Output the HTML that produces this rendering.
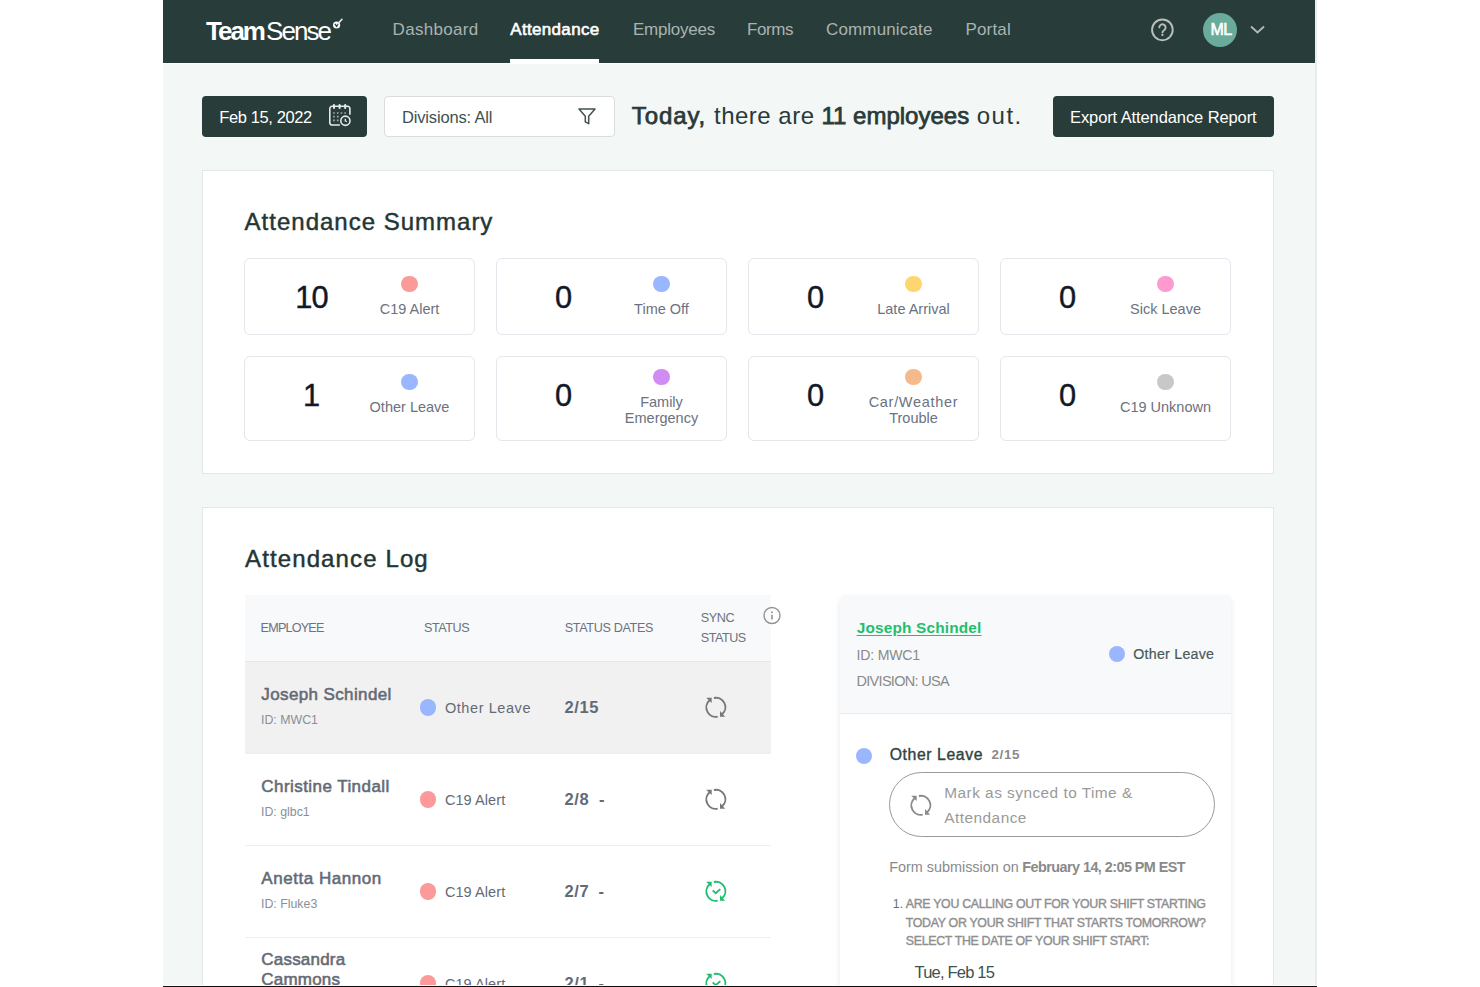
<!DOCTYPE html>
<html><head><meta charset="utf-8"><title>TeamSense Attendance</title>
<style>
html,body{margin:0;padding:0;width:1480px;height:987px;overflow:hidden;background:#fff;font-family:"Liberation Sans",sans-serif}
.r{position:absolute}
.t{position:absolute;white-space:nowrap}
b{font-weight:700}
</style></head><body>
<div class="r" style="left:163px;top:0px;width:1152px;height:985px;background:#f3f7f6"></div>
<div class="r" style="left:1315px;top:0px;width:2px;height:985px;background:#ececec"></div>
<div class="r" style="left:163px;top:0px;width:1152px;height:63px;background:#283c3a"></div>
<div class="r" style="left:163px;top:63px;width:1152px;height:1px;background:#ffffff"></div>
<div class="t " style="left:206px;top:18.49px;font-size:26px;line-height:26px;color:#fff;font-weight:400;letter-spacing:0px;"><b style="font-weight:700;letter-spacing:-2px">Team</b><span style="font-weight:400;letter-spacing:-1.95px;margin-left:2px">Sense</span></div>
<svg class="r" style="left:330px;top:16px" width="16" height="14" viewBox="0 0 16 14"><circle cx="6.6" cy="9" r="3.6" fill="#fff"/><path d="M4.9 7.9l1.7 2.4 2.4-3.8" fill="none" stroke="#283c3a" stroke-width="1.3"/><path d="M8 7.6L12 3.3" stroke="#e8ecea" stroke-width="1.6" stroke-linecap="round"/></svg>
<div class="t " style="left:392.6px;top:20.71px;font-size:17px;line-height:17px;color:#aab3b1;font-weight:400;letter-spacing:0.3px;">Dashboard</div>
<div class="t " style="left:510.3px;top:20.71px;font-size:17px;line-height:17px;color:#fff;font-weight:400;letter-spacing:0.32px;-webkit-text-stroke:0.6px #fff">Attendance</div>
<div class="r" style="left:510px;top:59px;width:89px;height:4px;background:#fff"></div>
<div class="t " style="left:633px;top:20.71px;font-size:17px;line-height:17px;color:#aab3b1;font-weight:400;letter-spacing:-0.22px;">Employees</div>
<div class="t " style="left:747px;top:20.71px;font-size:17px;line-height:17px;color:#aab3b1;font-weight:400;letter-spacing:-0.4px;">Forms</div>
<div class="t " style="left:826px;top:20.71px;font-size:17px;line-height:17px;color:#aab3b1;font-weight:400;letter-spacing:0.15px;">Communicate</div>
<div class="t " style="left:965.4px;top:20.71px;font-size:17px;line-height:17px;color:#aab3b1;font-weight:400;letter-spacing:0.2px;">Portal</div>
<svg class="r" style="left:1150px;top:17px" width="25" height="25" viewBox="0 0 25 25"><circle cx="12.4" cy="12.85" r="10.35" fill="none" stroke="#b8bfbd" stroke-width="1.9"/><path d="M9.3 10.4A3.15 3.15 0 1 1 14.4 12.9C13.3 13.7 12.5 14.1 12.5 15.4" fill="none" stroke="#b8bfbd" stroke-width="1.9" stroke-linecap="round"/><circle cx="12.45" cy="17.9" r="1.15" fill="#b8bfbd"/></svg>
<div class="r" style="left:1203.0px;top:12.7px;width:34.0px;height:34.0px;border-radius:50%;background:#6aab9c"></div>
<div class="t " style="left:1210.5px;top:21.65px;font-size:16px;line-height:16px;color:#fff;font-weight:400;letter-spacing:-0.5px;-webkit-text-stroke:0.6px #fff">ML</div>
<svg class="r" style="left:1249px;top:24px" width="17" height="11" viewBox="0 0 17 11"><path d="M2 2.5l6.5 6 6.5-6" fill="none" stroke="#b3bbb9" stroke-width="1.8"/></svg>
<div class="r" style="left:202px;top:96px;width:165px;height:41px;background:#283c3a;border-radius:4px"></div>
<div class="t " style="left:219.3px;top:109.23px;font-size:16.5px;line-height:16.5px;color:#fff;font-weight:400;letter-spacing:-0.39px;">Feb 15, 2022</div>
<svg class="r" style="left:328px;top:103px" width="25" height="25" viewBox="0 0 25 25" fill="none" stroke="#e4e8e7" stroke-width="1.6"><path d="M11.9 22H4a2.2 2.2 0 0 1-2.2-2.2V5.5A2.2 2.2 0 0 1 4 3.3h15.7a2.2 2.2 0 0 1 2.2 2.2v6.3"/><g stroke-width="2.1" stroke-linecap="round"><path d="M6 2v3M11.6 2v3M17.2 2v3"/></g><g stroke="#9fa9a7" stroke-width="1.7"><path d="M5.1 10h1.7M8.9 10h1.7M12.6 10h1.7M16.3 10h1.7M5.1 13.7h1.7M8.9 13.7h1.7M5.1 17.4h1.7M8.9 17.4h1.7"/></g><circle cx="17.4" cy="17.75" r="4.6"/><path d="M17.3 15.8v2l1.4 1" stroke-width="1.3"/></svg>
<div class="r" style="left:384px;top:96px;width:231px;height:41px;background:#fff;border:1px solid #d9dddd;border-radius:4px;box-sizing:border-box"></div>
<div class="t " style="left:402px;top:108.63px;font-size:16.5px;line-height:16.5px;color:#3e514f;font-weight:400;letter-spacing:-0.16px;">Divisions: All</div>
<svg class="r" style="left:577px;top:106.5px" width="20" height="19" viewBox="0 0 20 19"><path d="M2 2h16l-6.3 7.2v7.5l-3.4-1.9V9.2z" fill="none" stroke="#3e514f" stroke-width="1.5" stroke-linejoin="round"/></svg>
<div class="t " style="left:631.8px;top:104.28px;font-size:24px;line-height:24px;color:#2a3a39;font-weight:400;letter-spacing:0.9px;-webkit-text-stroke:0.75px #2a3a39">Today,</div>
<div class="t " style="left:714px;top:104.28px;font-size:24px;line-height:24px;color:#2a3a39;font-weight:400;letter-spacing:0.5px;">there are</div>
<div class="t " style="left:821.5px;top:104.28px;font-size:24px;line-height:24px;color:#2a3a39;font-weight:400;letter-spacing:0.0px;-webkit-text-stroke:0.75px #2a3a39">11 employees</div>
<div class="t " style="left:976.7px;top:104.28px;font-size:24px;line-height:24px;color:#2a3a39;font-weight:400;letter-spacing:1.5px;">out.</div>
<div class="r" style="left:1053px;top:96px;width:221px;height:41px;background:#283c3a;border-radius:4px"></div>
<div class="t " style="left:1070px;top:109.43px;font-size:16.5px;line-height:16.5px;color:#fff;font-weight:400;letter-spacing:-0.1px;">Export Attendance Report</div>
<div class="r" style="left:202px;top:170px;width:1072px;height:304px;background:#fff;border:1px solid #e3e7e6;box-sizing:border-box"></div>
<div class="t " style="left:244.6px;top:210.48px;font-size:24px;line-height:24px;color:#243634;font-weight:400;letter-spacing:1.0px;-webkit-text-stroke:0.45px #243634">Attendance Summary</div>
<div class="r" style="left:244.4px;top:258px;width:230.99999999999997px;height:77px;border:1px solid #e4e6eb;border-radius:6px;box-sizing:border-box;background:#fff"></div>
<div class="t" style="left:245px;width:133px;top:280.12px;text-align:center;font-size:30.8px;line-height:36px;color:#111827;letter-spacing:-1.0px;-webkit-text-stroke:0.4px #111827">10</div>
<div class="r" style="left:401.40000000000003px;top:275.8px;width:16.399999999999977px;height:16.399999999999977px;border-radius:50%;background:#fc9a9a"></div>
<div class="t" style="left:344px;width:131px;top:300.92px;text-align:center;font-size:14.5px;line-height:16.5px;color:#6b7280">C19 Alert</div>
<div class="r" style="left:496.4px;top:258px;width:231.0px;height:77px;border:1px solid #e4e6eb;border-radius:6px;box-sizing:border-box;background:#fff"></div>
<div class="t" style="left:497px;width:133px;top:280.12px;text-align:center;font-size:30.8px;line-height:36px;color:#111827;letter-spacing:0px;-webkit-text-stroke:0.4px #111827">0</div>
<div class="r" style="left:653.4px;top:275.8px;width:16.40000000000009px;height:16.399999999999977px;border-radius:50%;background:#9ab6fe"></div>
<div class="t" style="left:596px;width:131px;top:300.92px;text-align:center;font-size:14.5px;line-height:16.5px;color:#6b7280">Time Off</div>
<div class="r" style="left:748.4px;top:258px;width:231.0px;height:77px;border:1px solid #e4e6eb;border-radius:6px;box-sizing:border-box;background:#fff"></div>
<div class="t" style="left:749px;width:133px;top:280.12px;text-align:center;font-size:30.8px;line-height:36px;color:#111827;letter-spacing:0px;-webkit-text-stroke:0.4px #111827">0</div>
<div class="r" style="left:905.4px;top:275.8px;width:16.40000000000009px;height:16.399999999999977px;border-radius:50%;background:#fed66f"></div>
<div class="t" style="left:848px;width:131px;top:300.92px;text-align:center;font-size:14.5px;line-height:16.5px;color:#6b7280">Late Arrival</div>
<div class="r" style="left:1000.4px;top:258px;width:231.0000000000001px;height:77px;border:1px solid #e4e6eb;border-radius:6px;box-sizing:border-box;background:#fff"></div>
<div class="t" style="left:1001px;width:133px;top:280.12px;text-align:center;font-size:30.8px;line-height:36px;color:#111827;letter-spacing:0px;-webkit-text-stroke:0.4px #111827">0</div>
<div class="r" style="left:1157.3999999999999px;top:275.8px;width:16.40000000000009px;height:16.399999999999977px;border-radius:50%;background:#fd9bd0"></div>
<div class="t" style="left:1100px;width:131px;top:300.92px;text-align:center;font-size:14.5px;line-height:16.5px;color:#6b7280">Sick Leave</div>
<div class="r" style="left:244.4px;top:356px;width:230.99999999999997px;height:85px;border:1px solid #e4e6eb;border-radius:6px;box-sizing:border-box;background:#fff"></div>
<div class="t" style="left:245px;width:133px;top:378.12px;text-align:center;font-size:30.8px;line-height:36px;color:#111827;letter-spacing:0px;-webkit-text-stroke:0.4px #111827">1</div>
<div class="r" style="left:401.40000000000003px;top:373.8px;width:16.399999999999977px;height:16.399999999999977px;border-radius:50%;background:#9ab6fe"></div>
<div class="t" style="left:344px;width:131px;top:398.92px;text-align:center;font-size:14.5px;line-height:16.5px;color:#6b7280">Other Leave</div>
<div class="r" style="left:496.4px;top:356px;width:231.0px;height:85px;border:1px solid #e4e6eb;border-radius:6px;box-sizing:border-box;background:#fff"></div>
<div class="t" style="left:497px;width:133px;top:378.12px;text-align:center;font-size:30.8px;line-height:36px;color:#111827;letter-spacing:0px;-webkit-text-stroke:0.4px #111827">0</div>
<div class="r" style="left:653.4px;top:368.7px;width:16.40000000000009px;height:16.399999999999977px;border-radius:50%;background:#d08cf4"></div>
<div class="t" style="left:596px;width:131px;top:393.92px;text-align:center;font-size:14.5px;line-height:16.5px;color:#6b7280;white-space:normal">Family<br>Emergency</div>
<div class="r" style="left:748.4px;top:356px;width:231.0px;height:85px;border:1px solid #e4e6eb;border-radius:6px;box-sizing:border-box;background:#fff"></div>
<div class="t" style="left:749px;width:133px;top:378.12px;text-align:center;font-size:30.8px;line-height:36px;color:#111827;letter-spacing:0px;-webkit-text-stroke:0.4px #111827">0</div>
<div class="r" style="left:905.4px;top:368.7px;width:16.40000000000009px;height:16.399999999999977px;border-radius:50%;background:#f5ba8c"></div>
<div class="t" style="left:848px;width:131px;top:393.92px;text-align:center;font-size:14.5px;line-height:16.5px;color:#6b7280;white-space:normal"><span style="letter-spacing:0.7px">Car/Weather</span><br>Trouble</div>
<div class="r" style="left:1000.4px;top:356px;width:231.0000000000001px;height:85px;border:1px solid #e4e6eb;border-radius:6px;box-sizing:border-box;background:#fff"></div>
<div class="t" style="left:1001px;width:133px;top:378.12px;text-align:center;font-size:30.8px;line-height:36px;color:#111827;letter-spacing:0px;-webkit-text-stroke:0.4px #111827">0</div>
<div class="r" style="left:1157.3999999999999px;top:373.8px;width:16.40000000000009px;height:16.399999999999977px;border-radius:50%;background:#c8c8c8"></div>
<div class="t" style="left:1100px;width:131px;top:398.92px;text-align:center;font-size:14.5px;line-height:16.5px;color:#6b7280">C19 Unknown</div>
<div class="r" style="left:202px;top:507px;width:1072px;height:478px;background:#fff;border:1px solid #e3e7e6;border-bottom:none;box-sizing:border-box"></div>
<div class="t " style="left:245px;top:547.48px;font-size:24px;line-height:24px;color:#243634;font-weight:400;letter-spacing:1.12px;-webkit-text-stroke:0.45px #243634">Attendance Log</div>
<div class="r" style="left:245px;top:595px;width:526px;height:67px;background:#f8f9fa;border-bottom:1px solid #e5e7eb;box-sizing:border-box"></div>
<div class="t " style="left:260.6px;top:621.93px;font-size:12.6px;line-height:12.6px;color:#6b7280;font-weight:400;letter-spacing:-0.8px;">EMPLOYEE</div>
<div class="t " style="left:424px;top:621.93px;font-size:12.6px;line-height:12.6px;color:#6b7280;font-weight:400;letter-spacing:-0.45px;">STATUS</div>
<div class="t " style="left:564.7px;top:621.93px;font-size:12.6px;line-height:12.6px;color:#6b7280;font-weight:400;letter-spacing:-0.33px;">STATUS DATES</div>
<div class="t " style="left:700.7px;top:611.53px;font-size:12.6px;line-height:12.6px;color:#6b7280;font-weight:400;letter-spacing:-0.4px;">SYNC</div>
<div class="t " style="left:700.7px;top:631.93px;font-size:12.6px;line-height:12.6px;color:#6b7280;font-weight:400;letter-spacing:-0.45px;">STATUS</div>
<svg class="r" style="left:762.4px;top:605px" width="20" height="20" viewBox="0 0 20 20"><circle cx="10" cy="10.5" r="8" fill="none" stroke="#939393" stroke-width="1.4"/><path d="M10 9.8v4.8" stroke="#939393" stroke-width="1.6"/><circle cx="10" cy="7.2" r="0.95" fill="#939393"/></svg>
<div class="r" style="left:245px;top:662px;width:526px;height:92px;background:#f1f1f1;border-bottom:1px solid #eceef0;box-sizing:border-box"></div>
<div class="t " style="left:261.3px;top:685.71px;font-size:17px;line-height:17px;color:#646a75;font-weight:400;letter-spacing:0.38px;-webkit-text-stroke:0.55px #646a75">Joseph Schindel</div>
<div class="t " style="left:261px;top:713.84px;font-size:12.35px;line-height:12.35px;color:#8a8f98;font-weight:400;letter-spacing:0px;">ID: MWC1</div>
<div class="r" style="left:419.75px;top:699.25px;width:16.5px;height:16.5px;border-radius:50%;background:#9ab6fe"></div>
<div class="t " style="left:444.9px;top:700.72px;font-size:14.5px;line-height:14.5px;color:#646a75;font-weight:400;letter-spacing:0.58px;">Other Leave</div>
<div class="t " style="left:564.6px;top:699.03px;font-size:16.5px;line-height:16.5px;color:#646a75;font-weight:700;letter-spacing:0.6px;">2/15</div>
<svg class="r" style="left:700px;top:692px" width="32" height="32" viewBox="0 0 32 32"><g fill="none" stroke="#777" stroke-width="1.9"><path d="M9.6 8.3A9.4 9.4 0 0 0 17.7 24.6"/><path d="M13.9 6.0A9.4 9.4 0 0 1 22.2 22.2"/></g><g fill="#777"><path d="M6.2 5.8H11.7V11Z"/><path d="M20 19.1V24.7H25.1Z"/></g></svg>
<div class="r" style="left:245px;top:754px;width:526px;height:92px;background:#fff;border-bottom:1px solid #eceef0;box-sizing:border-box"></div>
<div class="t " style="left:261.3px;top:777.71px;font-size:17px;line-height:17px;color:#646a75;font-weight:400;letter-spacing:0.44px;-webkit-text-stroke:0.55px #646a75">Christine Tindall</div>
<div class="t " style="left:261px;top:805.84px;font-size:12.35px;line-height:12.35px;color:#8a8f98;font-weight:400;letter-spacing:0px;">ID: glbc1</div>
<div class="r" style="left:419.75px;top:791.25px;width:16.5px;height:16.5px;border-radius:50%;background:#fc9a9a"></div>
<div class="t " style="left:444.9px;top:792.72px;font-size:14.5px;line-height:14.5px;color:#646a75;font-weight:400;letter-spacing:0.08px;">C19 Alert</div>
<div class="t " style="left:564.6px;top:791.03px;font-size:16.5px;line-height:16.5px;color:#646a75;font-weight:700;letter-spacing:0.6px;">2/8</div>
<div class="t " style="left:598.9px;top:791.03px;font-size:16.5px;line-height:16.5px;color:#646a75;font-weight:700;letter-spacing:0px;">-</div>
<svg class="r" style="left:700px;top:784px" width="32" height="32" viewBox="0 0 32 32"><g fill="none" stroke="#777" stroke-width="1.9"><path d="M9.6 8.3A9.4 9.4 0 0 0 17.7 24.6"/><path d="M13.9 6.0A9.4 9.4 0 0 1 22.2 22.2"/></g><g fill="#777"><path d="M6.2 5.8H11.7V11Z"/><path d="M20 19.1V24.7H25.1Z"/></g></svg>
<div class="r" style="left:245px;top:846px;width:526px;height:92px;background:#fff;border-bottom:1px solid #eceef0;box-sizing:border-box"></div>
<div class="t " style="left:261.3px;top:869.71px;font-size:17px;line-height:17px;color:#646a75;font-weight:400;letter-spacing:0.54px;-webkit-text-stroke:0.55px #646a75">Anetta Hannon</div>
<div class="t " style="left:261px;top:897.84px;font-size:12.35px;line-height:12.35px;color:#8a8f98;font-weight:400;letter-spacing:0px;">ID: Fluke3</div>
<div class="r" style="left:419.75px;top:883.25px;width:16.5px;height:16.5px;border-radius:50%;background:#fc9a9a"></div>
<div class="t " style="left:444.9px;top:884.72px;font-size:14.5px;line-height:14.5px;color:#646a75;font-weight:400;letter-spacing:0.08px;">C19 Alert</div>
<div class="t " style="left:564.6px;top:883.03px;font-size:16.5px;line-height:16.5px;color:#646a75;font-weight:700;letter-spacing:0.6px;">2/7</div>
<div class="t " style="left:598.4px;top:883.03px;font-size:16.5px;line-height:16.5px;color:#646a75;font-weight:700;letter-spacing:0px;">-</div>
<svg class="r" style="left:700px;top:876px" width="32" height="32" viewBox="0 0 32 32"><g fill="none" stroke="#1fbf6e" stroke-width="1.9"><path d="M9.6 8.3A9.4 9.4 0 0 0 17.7 24.6"/><path d="M13.9 6.0A9.4 9.4 0 0 1 22.2 22.2"/></g><g fill="#1fbf6e"><path d="M6.2 5.8H11.7V11Z"/><path d="M20 19.1V24.7H25.1Z"/></g><path d="M12.7 14.4l3 2.9 4.6-4.2" fill="none" stroke="#1fbf6e" stroke-width="1.9"/></svg>
<div class="t " style="left:261.3px;top:951.01px;font-size:17px;line-height:17px;color:#646a75;font-weight:400;letter-spacing:0.2px;-webkit-text-stroke:0.55px #646a75">Cassandra</div>
<div class="t " style="left:261.3px;top:971.01px;font-size:17px;line-height:17px;color:#646a75;font-weight:400;letter-spacing:0.2px;-webkit-text-stroke:0.55px #646a75">Cammons</div>
<div class="r" style="left:419.75px;top:975.25px;width:16.5px;height:16.5px;border-radius:50%;background:#fc9a9a"></div>
<div class="t " style="left:444.9px;top:976.72px;font-size:14.5px;line-height:14.5px;color:#646a75;font-weight:400;letter-spacing:0.08px;">C19 Alert</div>
<div class="t " style="left:564.6px;top:975.03px;font-size:16.5px;line-height:16.5px;color:#646a75;font-weight:700;letter-spacing:0.6px;">2/1</div>
<div class="t " style="left:598.4px;top:975.03px;font-size:16.5px;line-height:16.5px;color:#646a75;font-weight:700;letter-spacing:0px;">-</div>
<svg class="r" style="left:700px;top:968px" width="32" height="32" viewBox="0 0 32 32"><g fill="none" stroke="#1fbf6e" stroke-width="1.9"><path d="M9.6 8.3A9.4 9.4 0 0 0 17.7 24.6"/><path d="M13.9 6.0A9.4 9.4 0 0 1 22.2 22.2"/></g><g fill="#1fbf6e"><path d="M6.2 5.8H11.7V11Z"/><path d="M20 19.1V24.7H25.1Z"/></g><path d="M12.7 14.4l3 2.9 4.6-4.2" fill="none" stroke="#1fbf6e" stroke-width="1.9"/></svg>
<div class="r" style="left:840px;top:595px;width:391px;height:405px;background:#fff;border-radius:5px 5px 0 0;box-shadow:0 3px 6px rgba(0,0,0,0.09)"></div>
<div class="r" style="left:840px;top:595px;width:391px;height:119px;background:#f8f9fb;border-radius:5px 5px 0 0;border-bottom:1px solid #e9ebee;box-sizing:border-box"></div>
<div class="t " style="left:856.7px;top:619.56px;font-size:15.4px;line-height:15.4px;color:#1fbf6e;font-weight:700;letter-spacing:0.17px;"><span style="text-decoration:underline;text-underline-offset:2px">Joseph Schindel</span></div>
<div class="t " style="left:856.5px;top:648.06px;font-size:14.1px;line-height:14.1px;color:#8a8a8a;font-weight:400;letter-spacing:-0.2px;">ID: MWC1</div>
<div class="t " style="left:856.5px;top:673.52px;font-size:14.5px;line-height:14.5px;color:#8a8a8a;font-weight:400;letter-spacing:-0.7px;">DIVISION: USA</div>
<div class="r" style="left:1108.8px;top:645.8px;width:16.40000000000009px;height:16.40000000000009px;border-radius:50%;background:#9ab6fe"></div>
<div class="t " style="left:1133.3px;top:647.04px;font-size:14.24px;line-height:14.24px;color:#4a5958;font-weight:400;letter-spacing:0.24px;-webkit-text-stroke:0.2px #4a5958">Other Leave</div>
<div class="r" style="left:856.0999999999999px;top:747.8px;width:16.40000000000009px;height:16.40000000000009px;border-radius:50%;background:#9ab6fe"></div>
<div class="t " style="left:889.7px;top:746.72px;font-size:15.8px;line-height:15.8px;color:#2e4240;font-weight:400;letter-spacing:0.58px;-webkit-text-stroke:0.35px #2e4240">Other Leave</div>
<div class="t " style="left:991.5px;top:748.45px;font-size:13.4px;line-height:13.4px;color:#8a8a8a;font-weight:700;letter-spacing:0.64px;">2/15</div>
<div class="r" style="left:889px;top:772px;width:326px;height:65px;border:1.5px solid #9a9a9a;border-radius:33px;box-sizing:border-box"></div>
<svg class="r" style="left:905px;top:789.5px" width="32" height="32" viewBox="0 0 32 32"><g fill="none" stroke="#8a8a8a" stroke-width="1.9"><path d="M9.6 8.3A9.4 9.4 0 0 0 17.7 24.6"/><path d="M13.9 6.0A9.4 9.4 0 0 1 22.2 22.2"/></g><g fill="#8a8a8a"><path d="M6.2 5.8H11.7V11Z"/><path d="M20 19.1V24.7H25.1Z"/></g></svg>
<div class="t " style="left:944.3px;top:785.06px;font-size:15.4px;line-height:15.4px;color:#9a9a9a;font-weight:400;letter-spacing:0.47px;">Mark as synced to Time &amp;</div>
<div class="t " style="left:944.3px;top:809.96px;font-size:15.4px;line-height:15.4px;color:#9a9a9a;font-weight:400;letter-spacing:0.47px;">Attendance</div>
<div class="t " style="left:889.2px;top:860.21px;font-size:14.4px;line-height:14.4px;color:#8a8a8a;font-weight:400;letter-spacing:0px;">Form submission on</div>
<div class="t " style="left:1022.3px;top:860.21px;font-size:14.4px;line-height:14.4px;color:#8a8a8a;font-weight:700;letter-spacing:-0.55px;">February 14, 2:05 PM EST</div>
<div class="t " style="left:892.8px;top:898.04px;font-size:12.35px;line-height:12.35px;color:#5e7370;font-weight:400;letter-spacing:0px;">1.</div>
<div class="t " style="left:905.8px;top:898.04px;font-size:12.35px;line-height:12.35px;color:#8f8f8f;font-weight:400;letter-spacing:-0.3px;-webkit-text-stroke:0.4px #8f8f8f">ARE YOU CALLING OUT FOR YOUR SHIFT STARTING</div>
<div class="t " style="left:905.8px;top:916.54px;font-size:12.35px;line-height:12.35px;color:#8f8f8f;font-weight:400;letter-spacing:-0.3px;-webkit-text-stroke:0.4px #8f8f8f">TODAY OR YOUR SHIFT THAT STARTS TOMORROW?</div>
<div class="t " style="left:905.8px;top:935.34px;font-size:12.35px;line-height:12.35px;color:#8f8f8f;font-weight:400;letter-spacing:-0.3px;-webkit-text-stroke:0.4px #8f8f8f">SELECT THE DATE OF YOUR SHIFT START:</div>
<div class="t " style="left:914.5px;top:963.63px;font-size:16.5px;line-height:16.5px;color:#3b524f;font-weight:400;letter-spacing:-0.8px;">Tue, Feb 15</div>
<div class="r" style="left:163px;top:985px;width:1154px;height:1px;background:#fafafa"></div>
<div class="r" style="left:163px;top:986px;width:1154px;height:1px;background:#111"></div>
</body></html>
